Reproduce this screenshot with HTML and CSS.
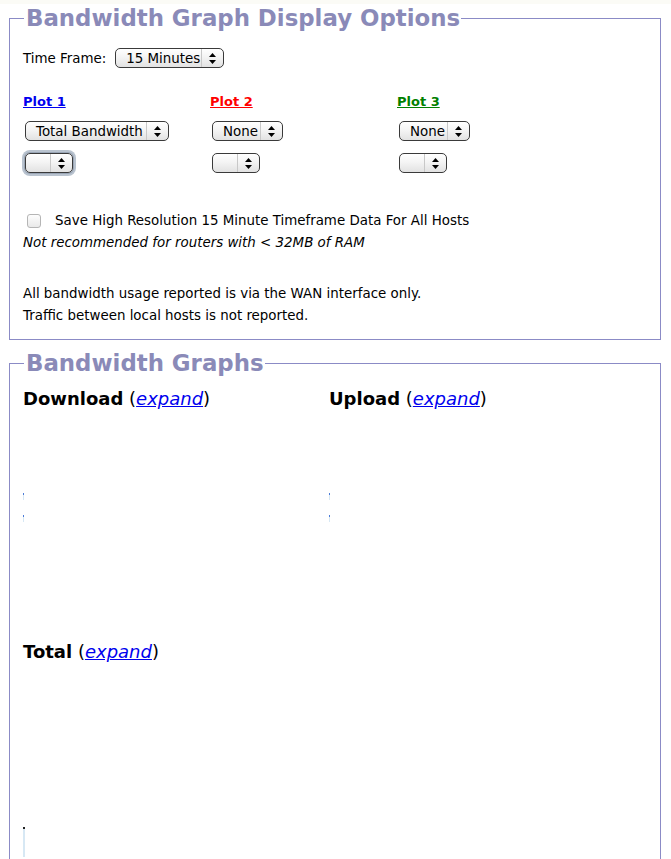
FILE: index.html
```html
<!DOCTYPE html>
<html>
<head>
<meta charset="utf-8">
<link rel="stylesheet" href="styles.css">
</head>
<body>
<div class="topstrip"></div>
<fieldset class="box box-options">
  <legend class="box-title">Bandwidth Graph Display Options</legend>
  <div class="row timeframe">
    <span class="label">Time Frame:</span>
    <span class="sel sel-tf"><span class="sel-text">15 Minutes</span><span class="sel-arrow"><svg width="7" height="11" viewBox="0 0 7 11"><path d="M3.5 0 L7 4 L0 4 Z M3.5 11 L7 7 L0 7 Z" fill="#000"/></svg></span></span>
  </div>
  <div class="plots">
    <div class="plot">
      <a class="plot-title blue" href="#">Plot 1</a>
      <span class="sel sel-total"><span class="sel-text">Total Bandwidth</span><span class="sel-arrow"><svg width="7" height="11" viewBox="0 0 7 11"><path d="M3.5 0 L7 4 L0 4 Z M3.5 11 L7 7 L0 7 Z" fill="#000"/></svg></span></span>
      <span class="sel sel-empty focus"><span class="sel-text"></span><span class="sel-arrow"><svg width="7" height="11" viewBox="0 0 7 11"><path d="M3.5 0 L7 4 L0 4 Z M3.5 11 L7 7 L0 7 Z" fill="#000"/></svg></span></span>
    </div>
    <div class="plot">
      <a class="plot-title red" href="#">Plot 2</a>
      <span class="sel sel-none"><span class="sel-text">None</span><span class="sel-arrow"><svg width="7" height="11" viewBox="0 0 7 11"><path d="M3.5 0 L7 4 L0 4 Z M3.5 11 L7 7 L0 7 Z" fill="#000"/></svg></span></span>
      <span class="sel sel-empty"><span class="sel-text"></span><span class="sel-arrow"><svg width="7" height="11" viewBox="0 0 7 11"><path d="M3.5 0 L7 4 L0 4 Z M3.5 11 L7 7 L0 7 Z" fill="#000"/></svg></span></span>
    </div>
    <div class="plot">
      <a class="plot-title green" href="#">Plot 3</a>
      <span class="sel sel-none"><span class="sel-text">None</span><span class="sel-arrow"><svg width="7" height="11" viewBox="0 0 7 11"><path d="M3.5 0 L7 4 L0 4 Z M3.5 11 L7 7 L0 7 Z" fill="#000"/></svg></span></span>
      <span class="sel sel-empty"><span class="sel-text"></span><span class="sel-arrow"><svg width="7" height="11" viewBox="0 0 7 11"><path d="M3.5 0 L7 4 L0 4 Z M3.5 11 L7 7 L0 7 Z" fill="#000"/></svg></span></span>
    </div>
  </div>
  <div class="row check-row">
    <span class="checkbox"></span>
    <span class="check-label">Save High Resolution 15 Minute Timeframe Data For All Hosts</span>
  </div>
  <div class="note">Not recommended for routers with &lt; 32MB of RAM</div>
  <div class="info">
    <div>All bandwidth usage reported is via the WAN interface only.</div>
    <div>Traffic between local hosts is not reported.</div>
  </div>
</fieldset>

<fieldset class="box box-graphs">
  <legend class="box-title">Bandwidth Graphs</legend>
  <div class="graphs">
    <div class="graph">
      <div class="graph-title"><b>Download</b> (<a href="#">expand</a>)</div>
      <div class="graph-area">
        <span class="tick"></span>
        <span class="tick"></span>
      </div>
    </div>
    <div class="graph">
      <div class="graph-title"><b>Upload</b> (<a href="#">expand</a>)</div>
      <div class="graph-area">
        <span class="tick"></span>
        <span class="tick"></span>
      </div>
    </div>
    <div class="graph">
      <div class="graph-title"><b>Total</b> (<a href="#">expand</a>)</div>
      <div class="graph-area total-area">
        <span class="tick dark"></span>
      </div>
    </div>
  </div>
</fieldset>
</body>
</html>
```

FILE: styles.css
```css
html, body {
  margin: 0;
  padding: 0;
  background: #ffffff;
}
body {
  font-family: "DejaVu Sans", Verdana, sans-serif;
  font-size: 13.4px;
  color: #000;
}
.topstrip {
  height: 4px;
  background: #fbfbf6;
}
.box {
  margin: 0 10px 0 9px;
  border: 1px solid #8b8bc6;
  padding: 0 13px;
}
.box-options {
  padding-bottom: 12px;
}
.box-graphs {
  margin-top: 9px;
  padding-bottom: 60px;
}
.box-title {
  font-size: 22.85px;
  font-weight: bold;
  color: #8a8ab8;
  padding: 0 1px 0 2px;
  margin-left: 1px;
  line-height: 28px;
}
.row {
  display: flex;
  align-items: center;
}
.timeframe {
  margin-top: 16px;
  gap: 9px;
}
.sel {
  display: inline-flex;
  align-items: stretch;
  height: 18px;
  border: 1px solid #3a3a3a;
  border-radius: 5px;
  background: linear-gradient(#ffffff, #f4f4f4 45%, #e2e2e2);
  font-size: 13.4px;
}
.sel-text {
  flex: 1;
  display: flex;
  align-items: center;
  padding-left: 10px;
  border-right: 1px solid #c8c8c8;
  white-space: nowrap;
  overflow: hidden;
}
.sel-arrow {
  width: 21px;
  display: flex;
  align-items: center;
  justify-content: center;
}
.sel-tf { width: 107px; }
.sel-total { width: 142px; }
.sel-none { width: 69px; }
.sel-empty { width: 46px; }
.sel.focus {
  box-shadow: 0 0 0 1px #9aa6b6, 0 0 0 3px #b9c3cf;
}
.plots {
  display: flex;
  margin-top: 26px;
}
.plot {
  width: 187px;
  display: flex;
  flex-direction: column;
  align-items: flex-start;
}
.plot .sel {
  margin-left: 2px;
  margin-top: 11px;
}
.plot .sel + .sel {
  margin-top: 12px;
}
.plot-title {
  font-weight: bold;
  font-size: 13px;
  line-height: 16px;
}
.blue { color: #0000ee; }
.red { color: #ff0000; }
.green { color: #008000; }
.check-row {
  margin-top: 37px;
}
.checkbox {
  width: 12px;
  height: 12px;
  border: 1px solid #b5b5b5;
  border-radius: 3px;
  background: linear-gradient(#fdfdfd, #e9e9e9);
  margin-left: 4px;
  margin-right: 14px;
}
.check-label {
  line-height: 22px;
}
.note {
  font-style: italic;
  line-height: 22px;
}
.info {
  margin-top: 29px;
  line-height: 22px;
}
.graphs {
  display: grid;
  grid-template-columns: 306px 306px;
}
.graph-title {
  font-size: 18px;
  margin-top: 11px;
  line-height: 22px;
}
.graph-title a {
  color: #0000ee;
  font-style: italic;
}
.graph-area {
  height: 220px;
  display: flex;
  flex-direction: column;
  padding-top: 83px;
  box-sizing: border-box;
}
.tick {
  display: block;
  width: 1px;
  height: 7px;
  background: linear-gradient(#4b7bd8 0 2px, #d7e8f4 2px);
  margin-bottom: 15px;
}
.tick.dark {
  background: linear-gradient(#222 0 2px, #d7e8f4 2px);
  width: 2px;
  margin-top: 81px;
  height: 30px;
}
.total-area {
  height: 210px;
}
```
